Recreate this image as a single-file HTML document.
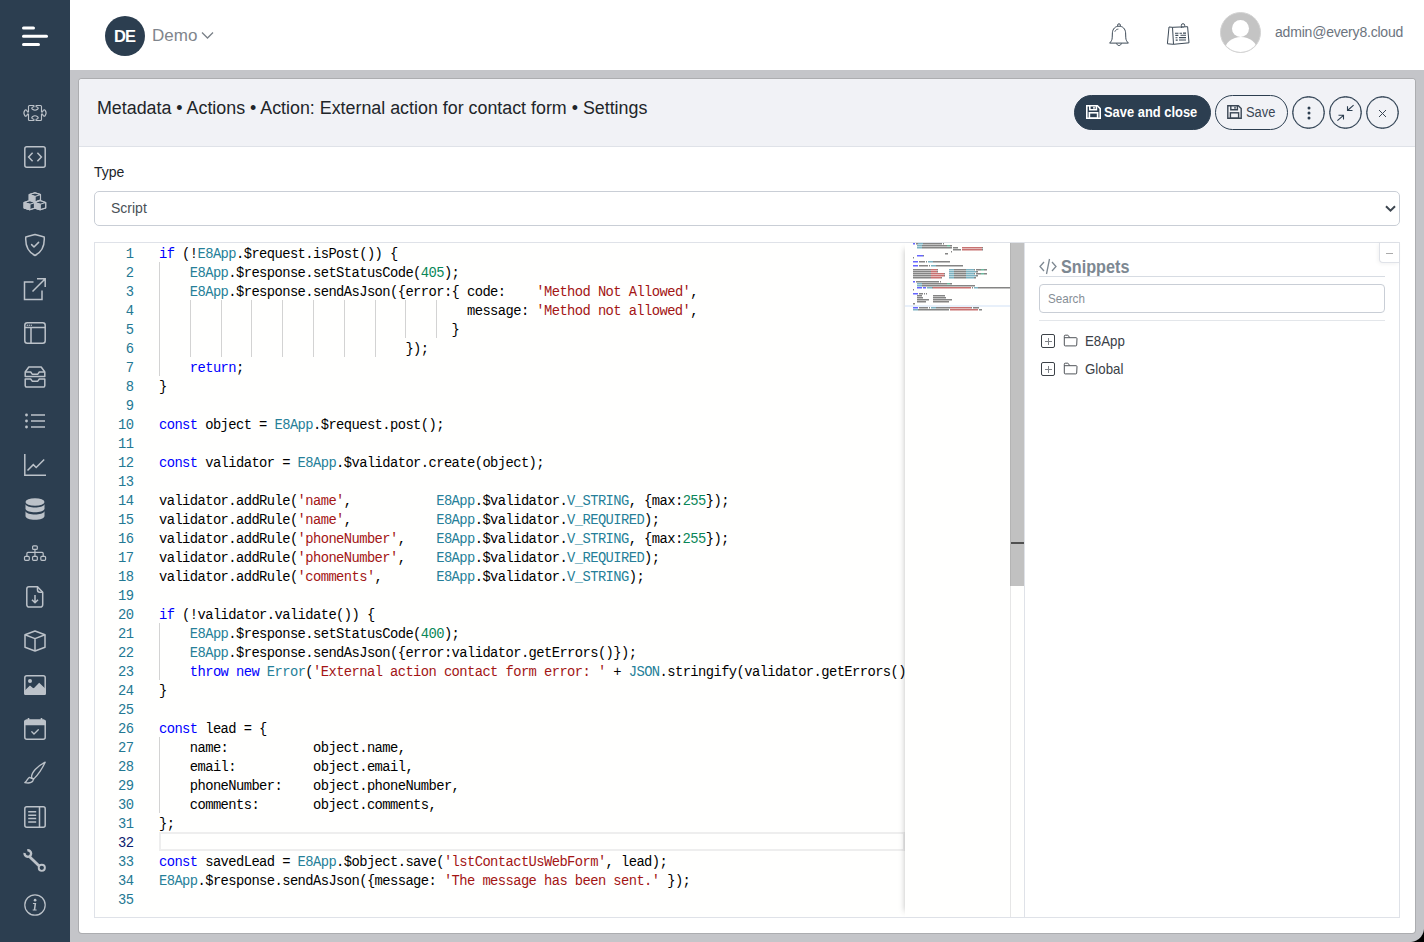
<!DOCTYPE html>
<html><head><meta charset="utf-8">
<style>
*{box-sizing:border-box;margin:0;padding:0}
html,body{width:1424px;height:942px;overflow:hidden;background:#c4c5c9;font-family:"Liberation Sans",sans-serif;color:#212529}
.abs{position:absolute}
#side{position:absolute;left:0;top:0;width:70px;height:942px;background:#2c3e50}
#top{position:absolute;left:70px;top:0;width:1354px;height:70px;background:#fff}
#panel{position:absolute;left:79px;top:79px;width:1336px;height:854px;background:#fff;border-radius:3px;overflow:hidden;box-shadow:0 0 0 1px rgba(0,0,0,.12)}
#phead{position:absolute;left:0;top:0;width:1336px;height:68px;background:#f1f2f6;border-bottom:1px solid #dfe2e8}
.title{position:absolute;left:18px;top:19px;font-size:17.85px;line-height:21px;color:#212529;white-space:nowrap}
.btn{position:absolute;border:1px solid #2c3e50;border-radius:18px;height:35px;font-size:15px;white-space:nowrap}
.cbtn{position:absolute;border:1px solid #2c3e50;box-shadow:inset 0 0 0 .4px #2c3e50;border-radius:50%;width:33px;height:33px}
.lbl{position:absolute;left:15px;top:85px;font-size:14px;line-height:16px}
.sel{position:absolute;left:15px;top:112px;width:1306px;height:35px;border:1px solid #c9ced6;border-radius:5px;font-size:14px;color:#495057}
#editor{position:absolute;left:15px;top:163px;width:1306px;height:676px;border:1px solid #dfe2e8;background:#fff}
#code{position:absolute;left:0;top:0;width:810px;height:674px;background:#fffffe;overflow:hidden;font-family:"Liberation Mono",monospace;font-size:13.8px;letter-spacing:-0.58px;line-height:19px}
#cur{position:absolute;left:64px;top:589px;width:746px;height:19px;border:2px solid #eeeeee}
.ln{position:absolute;left:0;width:38.5px;text-align:right;color:#237893;height:19px;margin-top:2px}
.ln.act{color:#0b216f}
.g{position:absolute;width:1px;height:19px;background:#d3d3d3}
.line{position:absolute;left:64px;white-space:pre;color:#000;height:19px;margin-top:1.5px}
.k{color:#0000ff}.t{color:#267f99}.s{color:#a31515}.n{color:#098658}
#mmap{position:absolute;left:810px;top:0;width:105px;height:674px;background:#fffffe;box-shadow:-6px 0 6px -6px rgba(0,0,0,.25)}
#mmap i{position:absolute;height:2px;margin-left:8px;opacity:.6}
#mmhl{position:absolute;left:0;top:62px;width:105px;height:2px;background:#e8f0fa}
#sbar{position:absolute;left:915px;top:0;width:14px;height:674px;background:#fffffe;border-left:1px solid #e6e6e6}
#thumb{position:absolute;left:-1px;top:0;width:14px;height:343px;background:#c1c1c1;box-shadow:inset 1px 0 0 #b4b4b4}
#ovl{position:absolute;left:0;top:299px;width:13px;height:2px;background:#505050}
#snip{position:absolute;left:929px;top:0;width:375px;height:674px;background:#fff;border-left:1px solid #dfe2e8}
.tree{position:absolute;left:0;height:14px;width:300px}
.pb{position:absolute;left:16px;top:0;width:14px;height:14px;border:1px solid #3c4248;border-radius:2px}
.pb:before{content:"";position:absolute;left:2.5px;top:5.5px;width:7px;height:1px;background:#808489}
.pb:after{content:"";position:absolute;left:5.5px;top:2.5px;width:1px;height:7px;background:#808489}
.tl{position:absolute;left:60px;top:-1px;font-size:14.5px;line-height:16px;color:#3a4047;transform:scaleX(0.915);transform-origin:0 0}
#corner{position:absolute;left:1410px;top:928px;width:14px;height:14px;background:radial-gradient(circle at 0 0,transparent 13.5px,#000 14.5px)}

</style></head><body>
<div id="side">
<svg class="abs" style="left:22px;top:26px" width="27" height="21" viewBox="0 0 27 21"><g stroke="#fff" stroke-width="3" stroke-linecap="round"><line x1="1.5" y1="2" x2="11.5" y2="2"/><line x1="1.5" y1="10.2" x2="24.5" y2="10.2"/><line x1="1.5" y1="18.5" x2="16.5" y2="18.5"/></g></svg>
<svg class="abs ic" style="left:22px;top:103px" width="26" height="20" viewBox="0 0 26 20" fill="none" stroke="#bcc2c9" stroke-width="1.15" stroke-linejoin="round">
<path d="M7.5 2.5H11.9V3.7A3.2 1.7 0 1 0 14.1 3.7V2.5H18.5Q19.5 2.5 19.5 3.5V8.9H20.6A1.7 3.2 0 1 1 20.6 11.1H19.5V16.5Q19.5 17.5 18.5 17.5H14.1V16.3A3.2 1.7 0 1 0 11.9 16.3V17.5H7.5Q6.5 17.5 6.5 16.5V11.1H5.4A1.7 3.2 0 1 1 5.4 8.9H6.5V3.5Q6.5 2.5 7.5 2.5Z"/></svg>
<svg class="abs ic" style="left:24px;top:146px" width="22" height="22" viewBox="0 0 22 22" fill="none" stroke="#bcc2c9" stroke-width="1.5"><rect x="0.8" y="0.8" width="20.4" height="20.4" rx="2"/><path d="M8.6 6.8 4.6 11l4 4.2M13.4 6.8l4 4.2-4 4.2"/></svg>
<svg class="abs ic" style="left:23px;top:191px" width="24" height="20" viewBox="0 0 24 20" stroke="#bcc2c9" stroke-width="1.1" stroke-linejoin="round"><path d="M11.9 1.7L17.5 3.5999999999999996V9.1L11.9 11.0L6.300000000000001 9.1V3.5999999999999996Z" fill="#2c3e50"/><path d="M6.300000000000001 3.5999999999999996L11.9 5.5V11.0L6.300000000000001 9.1Z" fill="#bcc2c9"/><path d="M11.9 1.7L17.5 3.5999999999999996V9.1L11.9 11.0L6.300000000000001 9.1V3.5999999999999996ZM6.300000000000001 3.5999999999999996L11.9 5.5L17.5 3.5999999999999996M11.9 5.5V11.0" fill="none"/><path d="M6.75 9.5L12.35 11.4V16.9L6.75 18.8L1.1500000000000004 16.9V11.4Z" fill="#2c3e50"/><path d="M1.1500000000000004 11.4L6.75 13.3V18.8L1.1500000000000004 16.9Z" fill="#bcc2c9"/><path d="M6.75 9.5L12.35 11.4V16.9L6.75 18.8L1.1500000000000004 16.9V11.4ZM1.1500000000000004 11.4L6.75 13.3L12.35 11.4M6.75 13.3V18.8" fill="none"/><path d="M17.1 9.5L22.700000000000003 11.4V16.9L17.1 18.8L11.500000000000002 16.9V11.4Z" fill="#2c3e50"/><path d="M11.500000000000002 11.4L17.1 13.3V18.8L11.500000000000002 16.9Z" fill="#bcc2c9"/><path d="M17.1 9.5L22.700000000000003 11.4V16.9L17.1 18.8L11.500000000000002 16.9V11.4ZM11.500000000000002 11.4L17.1 13.3L22.700000000000003 11.4M17.1 13.3V18.8" fill="none"/></svg>
<svg class="abs ic" style="left:24px;top:233px" width="22" height="24" viewBox="0 0 22 24" fill="none" stroke="#bcc2c9" stroke-width="1.5" stroke-linejoin="round" stroke-linecap="round">
<path d="M11 1.5C8 2.4 4.6 3.3 1.8 3.9 1.2 12 4.4 19.2 11 22.5 17.6 19.2 20.8 12 20.2 3.9 17.4 3.3 14 2.4 11 1.5z"/><path d="M7.6 11.6l2.4 2.4 4.6-4.6"/></svg>
<svg class="abs ic" style="left:23px;top:277px" width="24" height="24" viewBox="0 0 24 24" fill="none" stroke="#bcc2c9" stroke-width="1.5">
<path d="M10.5 5H1.5v17.5h17.5V13.5"/><path d="M9.5 14.5 22 2M14 1.8h8.2V10"/></svg>
<svg class="abs ic" style="left:24px;top:322px" width="22" height="22" viewBox="0 0 22 22" fill="none" stroke="#bcc2c9" stroke-width="1.5">
<rect x="0.8" y="0.8" width="20.4" height="20.4" rx="2.5"/><path d="M0.8 5.5h20.4M7 5.5v15.7"/><g fill="#bcc2c9" stroke="none"><circle cx="3.3" cy="3.2" r=".7"/><circle cx="5.3" cy="3.2" r=".7"/><circle cx="7.3" cy="3.2" r=".7"/></g></svg>
<svg class="abs ic" style="left:24px;top:366px" width="22" height="22" viewBox="0 0 22 22" fill="none" stroke="#bcc2c9" stroke-width="1.5" stroke-linejoin="round">
<path d="M4.8 1h12.4l3.6 5v4.5H1.2V6z"/><path d="M1.2 6h5.5l1.5 2.2h5.6L15.3 6h5.5"/><path d="M1.2 13h5.5l1.5 2.2h5.6l1.5-2.2h5.5v6.6a1.5 1.5 0 0 1-1.5 1.5H2.7a1.5 1.5 0 0 1-1.5-1.5z"/></svg>
<svg class="abs ic" style="left:24px;top:413px" width="22" height="16" viewBox="0 0 22 16" fill="none" stroke="#bcc2c9" stroke-width="1.5">
<path d="M7 2h14M7 8h14M7 14h14"/><g fill="#bcc2c9" stroke="none"><circle cx="2.5" cy="2" r="1.4"/><circle cx="2.5" cy="8" r="1.4"/><circle cx="2.5" cy="14" r="1.4"/></g></svg>
<svg class="abs ic" style="left:24px;top:454px" width="22" height="22" viewBox="0 0 22 22" fill="none" stroke="#bcc2c9" stroke-width="1.5">
<path d="M0.8 0v21.2H22"/><path d="M3.5 16.5 9.3 10.6l2.9 2.9L20.2 5.5" stroke-linejoin="miter"/></svg>
<svg class="abs ic" style="left:25px;top:498px" width="20" height="22" viewBox="0 0 20 22" fill="#bcc2c9">
<ellipse cx="10" cy="4" rx="9.5" ry="3.8"/><path d="M.5 6.3C1.5 8.6 5.5 9.6 10 9.6s8.5-1 9.5-3.3v4.6c-1 2.3-5 3.3-9.5 3.3S1.5 13.2.5 10.9z"/><path d="M.5 13.3c1 2.3 5 3.3 9.5 3.3s8.5-1 9.5-3.3V18c0 2.2-4.2 3.8-9.5 3.8S.5 20.2.5 18z"/></svg>
<svg class="abs ic" style="left:23px;top:543px" width="24" height="20" viewBox="0 0 24 20" fill="none" stroke="#bcc2c9" stroke-width="1.2">
<rect x="9.6" y="2.8" width="4.7" height="3.6" rx="1"/><path d="M11.95 6.4V9.4M3.9 13.3V10.4Q3.9 9.4 4.9 9.4H19.2Q20.2 9.4 20.2 10.4V13.3M11.95 9.4V13.3"/><rect x="1.5" y="13.4" width="4.8" height="3.9" rx="1"/><rect x="9.55" y="13.4" width="4.8" height="3.9" rx="1"/><rect x="17.8" y="13.4" width="4.8" height="3.9" rx="1"/></svg>
<svg class="abs ic" style="left:26px;top:586px" width="18" height="22" viewBox="0 0 18 22" fill="none" stroke="#bcc2c9" stroke-width="1.5" stroke-linejoin="round">
<path d="M3 .8h8.5l5.2 5.4v12.6a2.3 2.3 0 0 1-2.3 2.3H3.1A2.3 2.3 0 0 1 .8 18.8V3A2.2 2.2 0 0 1 3 .8z"/><path d="M11.5.8v3.2a2.2 2.2 0 0 0 2.2 2.2h3"/><path d="M9 9v7.8M6 13.8 9 16.8l3-3"/></svg>
<svg class="abs ic" style="left:24px;top:630px" width="22" height="22" viewBox="0 0 22 22" fill="none" stroke="#bcc2c9" stroke-width="1.5" stroke-linejoin="round">
<path d="M11 1 21 4.8v12.4L11 21 1 17.2V4.8z"/><path d="M1 4.8 11 8.6 21 4.8M11 8.6V21"/></svg>
<svg class="abs ic" style="left:24px;top:675px" width="22" height="20" viewBox="0 0 22 20" fill="none" stroke="#bcc2c9" stroke-width="1.5">
<rect x="0.8" y="0.8" width="20.4" height="18.4" rx="2"/><circle cx="6" cy="6" r="2" fill="#bcc2c9" stroke="none"/><path d="M0.8 16.5 6 11.5l3.6 3 5.6-5.6 6 5.6v3.7a1.5 1.5 0 0 1-1.5 1.5H2.3a1.5 1.5 0 0 1-1.5-1.5z" fill="#bcc2c9"/></svg>
<svg class="abs ic" style="left:24px;top:718px" width="22" height="22" viewBox="0 0 22 22" fill="none" stroke="#bcc2c9" stroke-width="1.5">
<path d="M0.8 6.5V4.2a2 2 0 0 1 2-2h16.4a2 2 0 0 1 2 2v2.3z" fill="#bcc2c9"/><rect x="0.8" y="2.2" width="20.4" height="19" rx="2"/><path d="M4.5 0v3M17.5 0v3" stroke-width="1.6"/><path d="M7.8 13.8l2.2 2.2 4.3-4.3" stroke-width="1.3" stroke-linecap="round"/></svg>
<svg class="abs ic" style="left:24px;top:761px" width="23" height="24" viewBox="0 0 23 24" fill="none" stroke="#bcc2c9" stroke-width="1.3" stroke-linejoin="round">
<path d="M7.6 16.9C6.8 11.5 13.5 5 21.2 1.2 18.5 7 14 13.8 9.8 17.9z"/><path d="M5.4 16.3 9.6 18.1C9 21.2 6.2 22.8 .8 21.6 3.2 20.2 3.5 17.2 5.4 16.3z"/></svg>
<svg class="abs ic" style="left:24px;top:806px" width="22" height="22" viewBox="0 0 22 22" fill="none" stroke="#bcc2c9" stroke-width="1.5">
<rect x="0.8" y="0.8" width="20.4" height="20.4" rx="2"/><path d="M15.5 0.8v20.4M4.2 5.8h8M4.2 9.2h8M4.2 12.6h8M4.2 16h8"/></svg>
<svg class="abs ic" style="left:23px;top:849px" width="23" height="23" viewBox="0 0 23 23" fill="none" stroke="#bcc2c9">
<path d="M4.29 1.31A3.25 3.25 0 1 1 1.65 3.94" stroke-width="2.4"/><path d="M6.6 7.7 16.2 16.9" stroke-width="2.8"/><circle cx="18.8" cy="18.8" r="3.1" stroke-width="1.9"/></svg>
<svg class="abs ic" style="left:24px;top:894px" width="22" height="22" viewBox="0 0 22 22" fill="none" stroke="#bcc2c9" stroke-width="1.25">
<circle cx="11" cy="11" r="10.2"/><g fill="#bcc2c9" stroke="none"><circle cx="11.1" cy="6.2" r="1.35"/><path d="M9 8.9H12.2L11.3 15.4H12.6V16.6H8.7V15.4H9.8L10.5 10.1H8.9Z"/></g></svg>
</div>

<div id="top">
<div class="abs" style="left:35px;top:16px;width:40px;height:40px;border-radius:50%;background:#2c3e50;color:#fff;font-weight:bold;font-size:16.5px;line-height:41px;text-align:center;letter-spacing:-1px;text-indent:-1px">DE</div>
<div class="abs" style="left:82px;top:26px;font-size:17px;color:#7f858c;line-height:20px">Demo</div>
<svg class="abs" style="left:131px;top:30.5px" width="13" height="9" viewBox="0 0 13 9" fill="none" stroke="#7a8088" stroke-width="1.3"><path d="M1 1.5l5.5 5.5L12 1.5"/></svg>
<svg class="abs" style="left:1038px;top:23px" width="22" height="24" viewBox="0 0 22 24" fill="none" stroke="#3d4a57" stroke-width="1" stroke-linejoin="round">
<path d="M11 3.2c-3.8 0-6.3 2.6-6.6 6.6l-.2 5c-.1 2.2-1 3.7-2.6 5.3h18.8c-1.6-1.6-2.5-3.1-2.6-5.3l-.2-5C17.3 5.8 14.8 3.2 11 3.2z"/><path d="M9.6 3.3V2.2a1.4 1.4 0 0 1 2.8 0v1.1M8.6 20.4c.4 1.3 1.2 2.1 2.4 2.1s2-.8 2.4-2.1"/><path d="M6.8 8.8c.5-1.6 1.8-2.6 3.6-2.7" stroke-width=".8"/></svg>
<svg class="abs" style="left:1096px;top:22px" width="26" height="25" viewBox="0 0 26 25" fill="none" stroke="#3d4a57" stroke-width="1" stroke-linejoin="round">
<path d="M6.5 5.3 21.6 4.7 23 20.8 7.5 22.3z"/><path d="M6.5 5.3 3 5 1.4 21.8 7.5 22.3"/><circle cx="17" cy="3.4" r="1.7" fill="#fff"/><path d="M15.8 4.6 15 6"/><path d="M9 11.3h3.5M13.5 11.2h2.5M17 11.1h3M9.3 13.4h3M14.5 13.3h5.5M9.5 15.7h2M13 15.6h7M9.7 18.1h2M13 18h7" stroke-width="1.1"/></svg>
<div class="abs" style="left:1150px;top:12px;width:41px;height:41px;border-radius:50%;background:#c4c4c4;overflow:hidden;border:1px solid #d4d4d4">
<div class="abs" style="left:11px;top:7px;width:17px;height:17px;border-radius:50%;background:#fff"></div>
<div class="abs" style="left:4px;top:24px;width:32px;height:26px;border-radius:50%;background:#fff"></div>
</div>
<div class="abs" style="left:1205px;top:23px;font-size:14px;letter-spacing:-0.2px;color:#6c747e;line-height:18px">admin@every8.cloud</div>
</div>

<div id="panel">
  <div id="phead">
    <div class="title">Metadata • Actions • Action: External action for contact form • Settings</div>
    <div class="btn" style="left:995px;top:16px;width:137px;background:#2c3e50;color:#fff;font-weight:bold">
      <svg class="abs" style="left:11px;top:9px" width="15" height="14" viewBox="0 0 15 14" fill="none" stroke="#fff" stroke-width="1.6"><path d="M.8 .8h10.6L14.2 3.6V13.2H.8z"/><path d="M3.8 .8v4h6.6v-4M8 1.8v2"/><rect x="3.4" y="7.8" width="8.2" height="5.4"/></svg>
      <span class="abs" style="left:29px;top:7px;line-height:18px;font-size:14.5px;transform:scaleX(0.89);transform-origin:0 0">Save and close</span>
    </div>
    <div class="btn" style="left:1136px;top:16px;width:73px;color:#3a4654">
      <svg class="abs" style="left:11px;top:9px" width="15" height="14" viewBox="0 0 15 14" fill="none" stroke="#3a4654" stroke-width="1.4"><path d="M.8 .8h10.6L14.2 3.6V13.2H.8z"/><path d="M3.8 .8v4h6.6v-4M8 1.8v2"/><rect x="3.4" y="7.8" width="8.2" height="5.4"/></svg>
      <span class="abs" style="left:29.5px;top:7px;line-height:18px;font-size:14px;transform:scaleX(0.92);transform-origin:0 0">Save</span>
    </div>
    <div class="cbtn" style="left:1213px;top:17px"><svg class="abs" style="left:14px;top:9px" width="4" height="14" viewBox="0 0 4 14" fill="#2c3e50"><circle cx="2" cy="2" r="1.5"/><circle cx="2" cy="7" r="1.5"/><circle cx="2" cy="12" r="1.5"/></svg></div>
    <div class="cbtn" style="left:1250px;top:17px"><svg class="abs" style="left:5px;top:5px" width="21" height="21" viewBox="0 0 21 21" fill="none" stroke="#2c3e50" stroke-width="1.1"><path d="M2.4 18.7 8.5 13.3M3.5 13.3h5v4.2M18.6 3.2 12.5 8.5M12.5 4.3v4.2h5"/></svg></div>
    <div class="cbtn" style="left:1287px;top:17px"><svg class="abs" style="left:11px;top:12px" width="9" height="9" viewBox="0 0 9 9" fill="none" stroke="#3a4654" stroke-width="1"><path d="M1 1l7 7M8 1 1 8"/></svg></div>
  </div>
  <div class="lbl">Type</div>
  <div class="sel"><span class="abs" style="left:16px;top:8px;line-height:16px">Script</span>
    <svg class="abs" style="left:1290px;top:13px" width="11" height="8" viewBox="0 0 11 8" fill="none" stroke="#3d4650" stroke-width="2"><path d="M1 1.2 5.5 5.7 10 1.2"/></svg></div>
  <div id="editor">
    <div id="code"><div id="cur"></div>
<div class="ln" style="top:0px">1</div>
<div class="line" style="top:0px"><span class="k">if</span> (!<span class="t">E8App</span>.$request.isPost()) {</div>
<div class="ln" style="top:19px">2</div>
<div class="g" style="left:64.0px;top:19px"></div>
<div class="line" style="top:19px">    <span class="t">E8App</span>.$response.setStatusCode(<span class="n">405</span>);</div>
<div class="ln" style="top:38px">3</div>
<div class="g" style="left:64.0px;top:38px"></div>
<div class="line" style="top:38px">    <span class="t">E8App</span>.$response.sendAsJson({error:{ code:    <span class="s">&#x27;Method Not Allowed&#x27;</span>,</div>
<div class="ln" style="top:57px">4</div>
<div class="g" style="left:64.0px;top:57px"></div>
<div class="g" style="left:94.8px;top:57px"></div>
<div class="g" style="left:125.6px;top:57px"></div>
<div class="g" style="left:156.4px;top:57px"></div>
<div class="g" style="left:187.2px;top:57px"></div>
<div class="g" style="left:218.0px;top:57px"></div>
<div class="g" style="left:248.8px;top:57px"></div>
<div class="g" style="left:279.6px;top:57px"></div>
<div class="g" style="left:310.4px;top:57px"></div>
<div class="g" style="left:341.2px;top:57px"></div>
<div class="line" style="top:57px">                                        message: <span class="s">&#x27;Method not allowed&#x27;</span>,</div>
<div class="ln" style="top:76px">5</div>
<div class="g" style="left:64.0px;top:76px"></div>
<div class="g" style="left:94.8px;top:76px"></div>
<div class="g" style="left:125.6px;top:76px"></div>
<div class="g" style="left:156.4px;top:76px"></div>
<div class="g" style="left:187.2px;top:76px"></div>
<div class="g" style="left:218.0px;top:76px"></div>
<div class="g" style="left:248.8px;top:76px"></div>
<div class="g" style="left:279.6px;top:76px"></div>
<div class="g" style="left:310.4px;top:76px"></div>
<div class="g" style="left:341.2px;top:76px"></div>
<div class="line" style="top:76px">                                      }</div>
<div class="ln" style="top:95px">6</div>
<div class="g" style="left:64.0px;top:95px"></div>
<div class="g" style="left:94.8px;top:95px"></div>
<div class="g" style="left:125.6px;top:95px"></div>
<div class="g" style="left:156.4px;top:95px"></div>
<div class="g" style="left:187.2px;top:95px"></div>
<div class="g" style="left:218.0px;top:95px"></div>
<div class="g" style="left:248.8px;top:95px"></div>
<div class="g" style="left:279.6px;top:95px"></div>
<div class="line" style="top:95px">                                });</div>
<div class="ln" style="top:114px">7</div>
<div class="g" style="left:64.0px;top:114px"></div>
<div class="line" style="top:114px">    <span class="k">return</span>;</div>
<div class="ln" style="top:133px">8</div>
<div class="line" style="top:133px">}</div>
<div class="ln" style="top:152px">9</div>
<div class="ln" style="top:171px">10</div>
<div class="line" style="top:171px"><span class="k">const</span> object = <span class="t">E8App</span>.$request.post();</div>
<div class="ln" style="top:190px">11</div>
<div class="ln" style="top:209px">12</div>
<div class="line" style="top:209px"><span class="k">const</span> validator = <span class="t">E8App</span>.$validator.create(object);</div>
<div class="ln" style="top:228px">13</div>
<div class="ln" style="top:247px">14</div>
<div class="line" style="top:247px">validator.addRule(<span class="s">&#x27;name&#x27;</span>,           <span class="t">E8App</span>.$validator.<span class="t">V_STRING</span>, {max:<span class="n">255</span>});</div>
<div class="ln" style="top:266px">15</div>
<div class="line" style="top:266px">validator.addRule(<span class="s">&#x27;name&#x27;</span>,           <span class="t">E8App</span>.$validator.<span class="t">V_REQUIRED</span>);</div>
<div class="ln" style="top:285px">16</div>
<div class="line" style="top:285px">validator.addRule(<span class="s">&#x27;phoneNumber&#x27;</span>,    <span class="t">E8App</span>.$validator.<span class="t">V_STRING</span>, {max:<span class="n">255</span>});</div>
<div class="ln" style="top:304px">17</div>
<div class="line" style="top:304px">validator.addRule(<span class="s">&#x27;phoneNumber&#x27;</span>,    <span class="t">E8App</span>.$validator.<span class="t">V_REQUIRED</span>);</div>
<div class="ln" style="top:323px">18</div>
<div class="line" style="top:323px">validator.addRule(<span class="s">&#x27;comments&#x27;</span>,       <span class="t">E8App</span>.$validator.<span class="t">V_STRING</span>);</div>
<div class="ln" style="top:342px">19</div>
<div class="ln" style="top:361px">20</div>
<div class="line" style="top:361px"><span class="k">if</span> (!validator.validate()) {</div>
<div class="ln" style="top:380px">21</div>
<div class="g" style="left:64.0px;top:380px"></div>
<div class="line" style="top:380px">    <span class="t">E8App</span>.$response.setStatusCode(<span class="n">400</span>);</div>
<div class="ln" style="top:399px">22</div>
<div class="g" style="left:64.0px;top:399px"></div>
<div class="line" style="top:399px">    <span class="t">E8App</span>.$response.sendAsJson({error:validator.getErrors()});</div>
<div class="ln" style="top:418px">23</div>
<div class="g" style="left:64.0px;top:418px"></div>
<div class="line" style="top:418px">    <span class="k">throw</span> <span class="k">new</span> <span class="t">Error</span>(<span class="s">&#x27;External action contact form error: &#x27;</span> + <span class="t">JSON</span>.stringify(validator.getErrors()));</div>
<div class="ln" style="top:437px">24</div>
<div class="line" style="top:437px">}</div>
<div class="ln" style="top:456px">25</div>
<div class="ln" style="top:475px">26</div>
<div class="line" style="top:475px"><span class="k">const</span> lead = {</div>
<div class="ln" style="top:494px">27</div>
<div class="g" style="left:64.0px;top:494px"></div>
<div class="line" style="top:494px">    name:           object.name,</div>
<div class="ln" style="top:513px">28</div>
<div class="g" style="left:64.0px;top:513px"></div>
<div class="line" style="top:513px">    email:          object.email,</div>
<div class="ln" style="top:532px">29</div>
<div class="g" style="left:64.0px;top:532px"></div>
<div class="line" style="top:532px">    phoneNumber:    object.phoneNumber,</div>
<div class="ln" style="top:551px">30</div>
<div class="g" style="left:64.0px;top:551px"></div>
<div class="line" style="top:551px">    comments:       object.comments,</div>
<div class="ln" style="top:570px">31</div>
<div class="line" style="top:570px">};</div>
<div class="ln act" style="top:589px">32</div>
<div class="ln" style="top:608px">33</div>
<div class="line" style="top:608px"><span class="k">const</span> savedLead = <span class="t">E8App</span>.$object.save(<span class="s">&#x27;lstContactUsWebForm&#x27;</span>, lead);</div>
<div class="ln" style="top:627px">34</div>
<div class="line" style="top:627px"><span class="t">E8App</span>.$response.sendAsJson({message: <span class="s">&#x27;The message has been sent.&#x27;</span> });</div>
<div class="ln" style="top:646px">35</div>
    </div>
    <div id="mmap"><div id="mmhl"></div><i style="left:0px;top:0px;width:2px;background:linear-gradient(#0000ff 50%,#0000ff80 50%)"></i><i style="left:3px;top:0px;width:1px;background:linear-gradient(#333333 50%,#33333380 50%)"></i><i style="left:4px;top:0px;width:1px;background:linear-gradient(#333333 50%,#33333380 50%)"></i><i style="left:5px;top:0px;width:5px;background:linear-gradient(#267f99 50%,#267f9980 50%)"></i><i style="left:10px;top:0px;width:1px;background:linear-gradient(#333333 50%,#33333380 50%)"></i><i style="left:11px;top:0px;width:8px;background:linear-gradient(#333333 50%,#33333380 50%)"></i><i style="left:19px;top:0px;width:1px;background:linear-gradient(#333333 50%,#33333380 50%)"></i><i style="left:20px;top:0px;width:6px;background:linear-gradient(#333333 50%,#33333380 50%)"></i><i style="left:26px;top:0px;width:1px;background:linear-gradient(#333333 50%,#33333380 50%)"></i><i style="left:27px;top:0px;width:1px;background:linear-gradient(#333333 50%,#33333380 50%)"></i><i style="left:28px;top:0px;width:1px;background:linear-gradient(#333333 50%,#33333380 50%)"></i><i style="left:30px;top:0px;width:1px;background:linear-gradient(#333333 50%,#33333380 50%)"></i><i style="left:4px;top:2px;width:5px;background:linear-gradient(#267f99 50%,#267f9980 50%)"></i><i style="left:9px;top:2px;width:1px;background:linear-gradient(#333333 50%,#33333380 50%)"></i><i style="left:10px;top:2px;width:9px;background:linear-gradient(#333333 50%,#33333380 50%)"></i><i style="left:19px;top:2px;width:1px;background:linear-gradient(#333333 50%,#33333380 50%)"></i><i style="left:20px;top:2px;width:13px;background:linear-gradient(#333333 50%,#33333380 50%)"></i><i style="left:33px;top:2px;width:1px;background:linear-gradient(#333333 50%,#33333380 50%)"></i><i style="left:34px;top:2px;width:3px;background:linear-gradient(#098658 50%,#09865880 50%)"></i><i style="left:37px;top:2px;width:1px;background:linear-gradient(#333333 50%,#33333380 50%)"></i><i style="left:38px;top:2px;width:1px;background:linear-gradient(#333333 50%,#33333380 50%)"></i><i style="left:4px;top:4px;width:5px;background:linear-gradient(#267f99 50%,#267f9980 50%)"></i><i style="left:9px;top:4px;width:1px;background:linear-gradient(#333333 50%,#33333380 50%)"></i><i style="left:10px;top:4px;width:9px;background:linear-gradient(#333333 50%,#33333380 50%)"></i><i style="left:19px;top:4px;width:1px;background:linear-gradient(#333333 50%,#33333380 50%)"></i><i style="left:20px;top:4px;width:10px;background:linear-gradient(#333333 50%,#33333380 50%)"></i><i style="left:30px;top:4px;width:1px;background:linear-gradient(#333333 50%,#33333380 50%)"></i><i style="left:31px;top:4px;width:1px;background:linear-gradient(#333333 50%,#33333380 50%)"></i><i style="left:32px;top:4px;width:5px;background:linear-gradient(#333333 50%,#33333380 50%)"></i><i style="left:37px;top:4px;width:1px;background:linear-gradient(#333333 50%,#33333380 50%)"></i><i style="left:38px;top:4px;width:1px;background:linear-gradient(#333333 50%,#33333380 50%)"></i><i style="left:40px;top:4px;width:4px;background:linear-gradient(#333333 50%,#33333380 50%)"></i><i style="left:44px;top:4px;width:1px;background:linear-gradient(#333333 50%,#33333380 50%)"></i><i style="left:49px;top:4px;width:20px;background:linear-gradient(#a31515 50%,#a3151580 50%)"></i><i style="left:69px;top:4px;width:1px;background:linear-gradient(#333333 50%,#33333380 50%)"></i><i style="left:40px;top:6px;width:7px;background:linear-gradient(#333333 50%,#33333380 50%)"></i><i style="left:47px;top:6px;width:1px;background:linear-gradient(#333333 50%,#33333380 50%)"></i><i style="left:49px;top:6px;width:20px;background:linear-gradient(#a31515 50%,#a3151580 50%)"></i><i style="left:69px;top:6px;width:1px;background:linear-gradient(#333333 50%,#33333380 50%)"></i><i style="left:38px;top:8px;width:1px;background:linear-gradient(#333333 50%,#33333380 50%)"></i><i style="left:32px;top:10px;width:1px;background:linear-gradient(#333333 50%,#33333380 50%)"></i><i style="left:33px;top:10px;width:1px;background:linear-gradient(#333333 50%,#33333380 50%)"></i><i style="left:34px;top:10px;width:1px;background:linear-gradient(#333333 50%,#33333380 50%)"></i><i style="left:4px;top:12px;width:6px;background:linear-gradient(#0000ff 50%,#0000ff80 50%)"></i><i style="left:10px;top:12px;width:1px;background:linear-gradient(#333333 50%,#33333380 50%)"></i><i style="left:0px;top:14px;width:1px;background:linear-gradient(#333333 50%,#33333380 50%)"></i><i style="left:0px;top:18px;width:5px;background:linear-gradient(#0000ff 50%,#0000ff80 50%)"></i><i style="left:6px;top:18px;width:6px;background:linear-gradient(#333333 50%,#33333380 50%)"></i><i style="left:13px;top:18px;width:1px;background:linear-gradient(#333333 50%,#33333380 50%)"></i><i style="left:15px;top:18px;width:5px;background:linear-gradient(#267f99 50%,#267f9980 50%)"></i><i style="left:20px;top:18px;width:1px;background:linear-gradient(#333333 50%,#33333380 50%)"></i><i style="left:21px;top:18px;width:8px;background:linear-gradient(#333333 50%,#33333380 50%)"></i><i style="left:29px;top:18px;width:1px;background:linear-gradient(#333333 50%,#33333380 50%)"></i><i style="left:30px;top:18px;width:4px;background:linear-gradient(#333333 50%,#33333380 50%)"></i><i style="left:34px;top:18px;width:1px;background:linear-gradient(#333333 50%,#33333380 50%)"></i><i style="left:35px;top:18px;width:1px;background:linear-gradient(#333333 50%,#33333380 50%)"></i><i style="left:36px;top:18px;width:1px;background:linear-gradient(#333333 50%,#33333380 50%)"></i><i style="left:0px;top:22px;width:5px;background:linear-gradient(#0000ff 50%,#0000ff80 50%)"></i><i style="left:6px;top:22px;width:9px;background:linear-gradient(#333333 50%,#33333380 50%)"></i><i style="left:16px;top:22px;width:1px;background:linear-gradient(#333333 50%,#33333380 50%)"></i><i style="left:18px;top:22px;width:5px;background:linear-gradient(#267f99 50%,#267f9980 50%)"></i><i style="left:23px;top:22px;width:1px;background:linear-gradient(#333333 50%,#33333380 50%)"></i><i style="left:24px;top:22px;width:10px;background:linear-gradient(#333333 50%,#33333380 50%)"></i><i style="left:34px;top:22px;width:1px;background:linear-gradient(#333333 50%,#33333380 50%)"></i><i style="left:35px;top:22px;width:6px;background:linear-gradient(#333333 50%,#33333380 50%)"></i><i style="left:41px;top:22px;width:1px;background:linear-gradient(#333333 50%,#33333380 50%)"></i><i style="left:42px;top:22px;width:6px;background:linear-gradient(#333333 50%,#33333380 50%)"></i><i style="left:48px;top:22px;width:1px;background:linear-gradient(#333333 50%,#33333380 50%)"></i><i style="left:49px;top:22px;width:1px;background:linear-gradient(#333333 50%,#33333380 50%)"></i><i style="left:0px;top:26px;width:9px;background:linear-gradient(#333333 50%,#33333380 50%)"></i><i style="left:9px;top:26px;width:1px;background:linear-gradient(#333333 50%,#33333380 50%)"></i><i style="left:10px;top:26px;width:7px;background:linear-gradient(#333333 50%,#33333380 50%)"></i><i style="left:17px;top:26px;width:1px;background:linear-gradient(#333333 50%,#33333380 50%)"></i><i style="left:18px;top:26px;width:6px;background:linear-gradient(#a31515 50%,#a3151580 50%)"></i><i style="left:24px;top:26px;width:1px;background:linear-gradient(#333333 50%,#33333380 50%)"></i><i style="left:36px;top:26px;width:5px;background:linear-gradient(#267f99 50%,#267f9980 50%)"></i><i style="left:41px;top:26px;width:1px;background:linear-gradient(#333333 50%,#33333380 50%)"></i><i style="left:42px;top:26px;width:10px;background:linear-gradient(#333333 50%,#33333380 50%)"></i><i style="left:52px;top:26px;width:1px;background:linear-gradient(#333333 50%,#33333380 50%)"></i><i style="left:53px;top:26px;width:8px;background:linear-gradient(#267f99 50%,#267f9980 50%)"></i><i style="left:61px;top:26px;width:1px;background:linear-gradient(#333333 50%,#33333380 50%)"></i><i style="left:63px;top:26px;width:1px;background:linear-gradient(#333333 50%,#33333380 50%)"></i><i style="left:64px;top:26px;width:3px;background:linear-gradient(#333333 50%,#33333380 50%)"></i><i style="left:67px;top:26px;width:1px;background:linear-gradient(#333333 50%,#33333380 50%)"></i><i style="left:68px;top:26px;width:3px;background:linear-gradient(#098658 50%,#09865880 50%)"></i><i style="left:71px;top:26px;width:1px;background:linear-gradient(#333333 50%,#33333380 50%)"></i><i style="left:72px;top:26px;width:1px;background:linear-gradient(#333333 50%,#33333380 50%)"></i><i style="left:73px;top:26px;width:1px;background:linear-gradient(#333333 50%,#33333380 50%)"></i><i style="left:0px;top:28px;width:9px;background:linear-gradient(#333333 50%,#33333380 50%)"></i><i style="left:9px;top:28px;width:1px;background:linear-gradient(#333333 50%,#33333380 50%)"></i><i style="left:10px;top:28px;width:7px;background:linear-gradient(#333333 50%,#33333380 50%)"></i><i style="left:17px;top:28px;width:1px;background:linear-gradient(#333333 50%,#33333380 50%)"></i><i style="left:18px;top:28px;width:6px;background:linear-gradient(#a31515 50%,#a3151580 50%)"></i><i style="left:24px;top:28px;width:1px;background:linear-gradient(#333333 50%,#33333380 50%)"></i><i style="left:36px;top:28px;width:5px;background:linear-gradient(#267f99 50%,#267f9980 50%)"></i><i style="left:41px;top:28px;width:1px;background:linear-gradient(#333333 50%,#33333380 50%)"></i><i style="left:42px;top:28px;width:10px;background:linear-gradient(#333333 50%,#33333380 50%)"></i><i style="left:52px;top:28px;width:1px;background:linear-gradient(#333333 50%,#33333380 50%)"></i><i style="left:53px;top:28px;width:10px;background:linear-gradient(#267f99 50%,#267f9980 50%)"></i><i style="left:63px;top:28px;width:1px;background:linear-gradient(#333333 50%,#33333380 50%)"></i><i style="left:64px;top:28px;width:1px;background:linear-gradient(#333333 50%,#33333380 50%)"></i><i style="left:0px;top:30px;width:9px;background:linear-gradient(#333333 50%,#33333380 50%)"></i><i style="left:9px;top:30px;width:1px;background:linear-gradient(#333333 50%,#33333380 50%)"></i><i style="left:10px;top:30px;width:7px;background:linear-gradient(#333333 50%,#33333380 50%)"></i><i style="left:17px;top:30px;width:1px;background:linear-gradient(#333333 50%,#33333380 50%)"></i><i style="left:18px;top:30px;width:13px;background:linear-gradient(#a31515 50%,#a3151580 50%)"></i><i style="left:31px;top:30px;width:1px;background:linear-gradient(#333333 50%,#33333380 50%)"></i><i style="left:36px;top:30px;width:5px;background:linear-gradient(#267f99 50%,#267f9980 50%)"></i><i style="left:41px;top:30px;width:1px;background:linear-gradient(#333333 50%,#33333380 50%)"></i><i style="left:42px;top:30px;width:10px;background:linear-gradient(#333333 50%,#33333380 50%)"></i><i style="left:52px;top:30px;width:1px;background:linear-gradient(#333333 50%,#33333380 50%)"></i><i style="left:53px;top:30px;width:8px;background:linear-gradient(#267f99 50%,#267f9980 50%)"></i><i style="left:61px;top:30px;width:1px;background:linear-gradient(#333333 50%,#33333380 50%)"></i><i style="left:63px;top:30px;width:1px;background:linear-gradient(#333333 50%,#33333380 50%)"></i><i style="left:64px;top:30px;width:3px;background:linear-gradient(#333333 50%,#33333380 50%)"></i><i style="left:67px;top:30px;width:1px;background:linear-gradient(#333333 50%,#33333380 50%)"></i><i style="left:68px;top:30px;width:3px;background:linear-gradient(#098658 50%,#09865880 50%)"></i><i style="left:71px;top:30px;width:1px;background:linear-gradient(#333333 50%,#33333380 50%)"></i><i style="left:72px;top:30px;width:1px;background:linear-gradient(#333333 50%,#33333380 50%)"></i><i style="left:73px;top:30px;width:1px;background:linear-gradient(#333333 50%,#33333380 50%)"></i><i style="left:0px;top:32px;width:9px;background:linear-gradient(#333333 50%,#33333380 50%)"></i><i style="left:9px;top:32px;width:1px;background:linear-gradient(#333333 50%,#33333380 50%)"></i><i style="left:10px;top:32px;width:7px;background:linear-gradient(#333333 50%,#33333380 50%)"></i><i style="left:17px;top:32px;width:1px;background:linear-gradient(#333333 50%,#33333380 50%)"></i><i style="left:18px;top:32px;width:13px;background:linear-gradient(#a31515 50%,#a3151580 50%)"></i><i style="left:31px;top:32px;width:1px;background:linear-gradient(#333333 50%,#33333380 50%)"></i><i style="left:36px;top:32px;width:5px;background:linear-gradient(#267f99 50%,#267f9980 50%)"></i><i style="left:41px;top:32px;width:1px;background:linear-gradient(#333333 50%,#33333380 50%)"></i><i style="left:42px;top:32px;width:10px;background:linear-gradient(#333333 50%,#33333380 50%)"></i><i style="left:52px;top:32px;width:1px;background:linear-gradient(#333333 50%,#33333380 50%)"></i><i style="left:53px;top:32px;width:10px;background:linear-gradient(#267f99 50%,#267f9980 50%)"></i><i style="left:63px;top:32px;width:1px;background:linear-gradient(#333333 50%,#33333380 50%)"></i><i style="left:64px;top:32px;width:1px;background:linear-gradient(#333333 50%,#33333380 50%)"></i><i style="left:0px;top:34px;width:9px;background:linear-gradient(#333333 50%,#33333380 50%)"></i><i style="left:9px;top:34px;width:1px;background:linear-gradient(#333333 50%,#33333380 50%)"></i><i style="left:10px;top:34px;width:7px;background:linear-gradient(#333333 50%,#33333380 50%)"></i><i style="left:17px;top:34px;width:1px;background:linear-gradient(#333333 50%,#33333380 50%)"></i><i style="left:18px;top:34px;width:10px;background:linear-gradient(#a31515 50%,#a3151580 50%)"></i><i style="left:28px;top:34px;width:1px;background:linear-gradient(#333333 50%,#33333380 50%)"></i><i style="left:36px;top:34px;width:5px;background:linear-gradient(#267f99 50%,#267f9980 50%)"></i><i style="left:41px;top:34px;width:1px;background:linear-gradient(#333333 50%,#33333380 50%)"></i><i style="left:42px;top:34px;width:10px;background:linear-gradient(#333333 50%,#33333380 50%)"></i><i style="left:52px;top:34px;width:1px;background:linear-gradient(#333333 50%,#33333380 50%)"></i><i style="left:53px;top:34px;width:8px;background:linear-gradient(#267f99 50%,#267f9980 50%)"></i><i style="left:61px;top:34px;width:1px;background:linear-gradient(#333333 50%,#33333380 50%)"></i><i style="left:62px;top:34px;width:1px;background:linear-gradient(#333333 50%,#33333380 50%)"></i><i style="left:0px;top:38px;width:2px;background:linear-gradient(#0000ff 50%,#0000ff80 50%)"></i><i style="left:3px;top:38px;width:1px;background:linear-gradient(#333333 50%,#33333380 50%)"></i><i style="left:4px;top:38px;width:1px;background:linear-gradient(#333333 50%,#33333380 50%)"></i><i style="left:5px;top:38px;width:9px;background:linear-gradient(#333333 50%,#33333380 50%)"></i><i style="left:14px;top:38px;width:1px;background:linear-gradient(#333333 50%,#33333380 50%)"></i><i style="left:15px;top:38px;width:8px;background:linear-gradient(#333333 50%,#33333380 50%)"></i><i style="left:23px;top:38px;width:1px;background:linear-gradient(#333333 50%,#33333380 50%)"></i><i style="left:24px;top:38px;width:1px;background:linear-gradient(#333333 50%,#33333380 50%)"></i><i style="left:25px;top:38px;width:1px;background:linear-gradient(#333333 50%,#33333380 50%)"></i><i style="left:27px;top:38px;width:1px;background:linear-gradient(#333333 50%,#33333380 50%)"></i><i style="left:4px;top:40px;width:5px;background:linear-gradient(#267f99 50%,#267f9980 50%)"></i><i style="left:9px;top:40px;width:1px;background:linear-gradient(#333333 50%,#33333380 50%)"></i><i style="left:10px;top:40px;width:9px;background:linear-gradient(#333333 50%,#33333380 50%)"></i><i style="left:19px;top:40px;width:1px;background:linear-gradient(#333333 50%,#33333380 50%)"></i><i style="left:20px;top:40px;width:13px;background:linear-gradient(#333333 50%,#33333380 50%)"></i><i style="left:33px;top:40px;width:1px;background:linear-gradient(#333333 50%,#33333380 50%)"></i><i style="left:34px;top:40px;width:3px;background:linear-gradient(#098658 50%,#09865880 50%)"></i><i style="left:37px;top:40px;width:1px;background:linear-gradient(#333333 50%,#33333380 50%)"></i><i style="left:38px;top:40px;width:1px;background:linear-gradient(#333333 50%,#33333380 50%)"></i><i style="left:4px;top:42px;width:5px;background:linear-gradient(#267f99 50%,#267f9980 50%)"></i><i style="left:9px;top:42px;width:1px;background:linear-gradient(#333333 50%,#33333380 50%)"></i><i style="left:10px;top:42px;width:9px;background:linear-gradient(#333333 50%,#33333380 50%)"></i><i style="left:19px;top:42px;width:1px;background:linear-gradient(#333333 50%,#33333380 50%)"></i><i style="left:20px;top:42px;width:10px;background:linear-gradient(#333333 50%,#33333380 50%)"></i><i style="left:30px;top:42px;width:1px;background:linear-gradient(#333333 50%,#33333380 50%)"></i><i style="left:31px;top:42px;width:1px;background:linear-gradient(#333333 50%,#33333380 50%)"></i><i style="left:32px;top:42px;width:5px;background:linear-gradient(#333333 50%,#33333380 50%)"></i><i style="left:37px;top:42px;width:1px;background:linear-gradient(#333333 50%,#33333380 50%)"></i><i style="left:38px;top:42px;width:9px;background:linear-gradient(#333333 50%,#33333380 50%)"></i><i style="left:47px;top:42px;width:1px;background:linear-gradient(#333333 50%,#33333380 50%)"></i><i style="left:48px;top:42px;width:9px;background:linear-gradient(#333333 50%,#33333380 50%)"></i><i style="left:57px;top:42px;width:1px;background:linear-gradient(#333333 50%,#33333380 50%)"></i><i style="left:58px;top:42px;width:1px;background:linear-gradient(#333333 50%,#33333380 50%)"></i><i style="left:59px;top:42px;width:1px;background:linear-gradient(#333333 50%,#33333380 50%)"></i><i style="left:60px;top:42px;width:1px;background:linear-gradient(#333333 50%,#33333380 50%)"></i><i style="left:61px;top:42px;width:1px;background:linear-gradient(#333333 50%,#33333380 50%)"></i><i style="left:4px;top:44px;width:5px;background:linear-gradient(#0000ff 50%,#0000ff80 50%)"></i><i style="left:10px;top:44px;width:3px;background:linear-gradient(#0000ff 50%,#0000ff80 50%)"></i><i style="left:14px;top:44px;width:5px;background:linear-gradient(#267f99 50%,#267f9980 50%)"></i><i style="left:19px;top:44px;width:1px;background:linear-gradient(#333333 50%,#33333380 50%)"></i><i style="left:20px;top:44px;width:38px;background:linear-gradient(#a31515 50%,#a3151580 50%)"></i><i style="left:59px;top:44px;width:1px;background:linear-gradient(#333333 50%,#33333380 50%)"></i><i style="left:61px;top:44px;width:4px;background:linear-gradient(#267f99 50%,#267f9980 50%)"></i><i style="left:65px;top:44px;width:1px;background:linear-gradient(#333333 50%,#33333380 50%)"></i><i style="left:66px;top:44px;width:9px;background:linear-gradient(#333333 50%,#33333380 50%)"></i><i style="left:75px;top:44px;width:1px;background:linear-gradient(#333333 50%,#33333380 50%)"></i><i style="left:76px;top:44px;width:9px;background:linear-gradient(#333333 50%,#33333380 50%)"></i><i style="left:85px;top:44px;width:1px;background:linear-gradient(#333333 50%,#33333380 50%)"></i><i style="left:86px;top:44px;width:9px;background:linear-gradient(#333333 50%,#33333380 50%)"></i><i style="left:95px;top:44px;width:1px;background:linear-gradient(#333333 50%,#33333380 50%)"></i><i style="left:96px;top:44px;width:1px;background:linear-gradient(#333333 50%,#33333380 50%)"></i><i style="left:97px;top:44px;width:1px;background:linear-gradient(#333333 50%,#33333380 50%)"></i><i style="left:98px;top:44px;width:1px;background:linear-gradient(#333333 50%,#33333380 50%)"></i><i style="left:99px;top:44px;width:1px;background:linear-gradient(#333333 50%,#33333380 50%)"></i><i style="left:0px;top:46px;width:1px;background:linear-gradient(#333333 50%,#33333380 50%)"></i><i style="left:0px;top:50px;width:5px;background:linear-gradient(#0000ff 50%,#0000ff80 50%)"></i><i style="left:6px;top:50px;width:4px;background:linear-gradient(#333333 50%,#33333380 50%)"></i><i style="left:11px;top:50px;width:1px;background:linear-gradient(#333333 50%,#33333380 50%)"></i><i style="left:13px;top:50px;width:1px;background:linear-gradient(#333333 50%,#33333380 50%)"></i><i style="left:4px;top:52px;width:4px;background:linear-gradient(#333333 50%,#33333380 50%)"></i><i style="left:8px;top:52px;width:1px;background:linear-gradient(#333333 50%,#33333380 50%)"></i><i style="left:20px;top:52px;width:6px;background:linear-gradient(#333333 50%,#33333380 50%)"></i><i style="left:26px;top:52px;width:1px;background:linear-gradient(#333333 50%,#33333380 50%)"></i><i style="left:27px;top:52px;width:4px;background:linear-gradient(#333333 50%,#33333380 50%)"></i><i style="left:31px;top:52px;width:1px;background:linear-gradient(#333333 50%,#33333380 50%)"></i><i style="left:4px;top:54px;width:5px;background:linear-gradient(#333333 50%,#33333380 50%)"></i><i style="left:9px;top:54px;width:1px;background:linear-gradient(#333333 50%,#33333380 50%)"></i><i style="left:20px;top:54px;width:6px;background:linear-gradient(#333333 50%,#33333380 50%)"></i><i style="left:26px;top:54px;width:1px;background:linear-gradient(#333333 50%,#33333380 50%)"></i><i style="left:27px;top:54px;width:5px;background:linear-gradient(#333333 50%,#33333380 50%)"></i><i style="left:32px;top:54px;width:1px;background:linear-gradient(#333333 50%,#33333380 50%)"></i><i style="left:4px;top:56px;width:11px;background:linear-gradient(#333333 50%,#33333380 50%)"></i><i style="left:15px;top:56px;width:1px;background:linear-gradient(#333333 50%,#33333380 50%)"></i><i style="left:20px;top:56px;width:6px;background:linear-gradient(#333333 50%,#33333380 50%)"></i><i style="left:26px;top:56px;width:1px;background:linear-gradient(#333333 50%,#33333380 50%)"></i><i style="left:27px;top:56px;width:11px;background:linear-gradient(#333333 50%,#33333380 50%)"></i><i style="left:38px;top:56px;width:1px;background:linear-gradient(#333333 50%,#33333380 50%)"></i><i style="left:4px;top:58px;width:8px;background:linear-gradient(#333333 50%,#33333380 50%)"></i><i style="left:12px;top:58px;width:1px;background:linear-gradient(#333333 50%,#33333380 50%)"></i><i style="left:20px;top:58px;width:6px;background:linear-gradient(#333333 50%,#33333380 50%)"></i><i style="left:26px;top:58px;width:1px;background:linear-gradient(#333333 50%,#33333380 50%)"></i><i style="left:27px;top:58px;width:8px;background:linear-gradient(#333333 50%,#33333380 50%)"></i><i style="left:35px;top:58px;width:1px;background:linear-gradient(#333333 50%,#33333380 50%)"></i><i style="left:0px;top:60px;width:1px;background:linear-gradient(#333333 50%,#33333380 50%)"></i><i style="left:1px;top:60px;width:1px;background:linear-gradient(#333333 50%,#33333380 50%)"></i><i style="left:0px;top:64px;width:5px;background:linear-gradient(#0000ff 50%,#0000ff80 50%)"></i><i style="left:6px;top:64px;width:9px;background:linear-gradient(#333333 50%,#33333380 50%)"></i><i style="left:16px;top:64px;width:1px;background:linear-gradient(#333333 50%,#33333380 50%)"></i><i style="left:18px;top:64px;width:5px;background:linear-gradient(#267f99 50%,#267f9980 50%)"></i><i style="left:23px;top:64px;width:1px;background:linear-gradient(#333333 50%,#33333380 50%)"></i><i style="left:24px;top:64px;width:7px;background:linear-gradient(#333333 50%,#33333380 50%)"></i><i style="left:31px;top:64px;width:1px;background:linear-gradient(#333333 50%,#33333380 50%)"></i><i style="left:32px;top:64px;width:4px;background:linear-gradient(#333333 50%,#33333380 50%)"></i><i style="left:36px;top:64px;width:1px;background:linear-gradient(#333333 50%,#33333380 50%)"></i><i style="left:37px;top:64px;width:21px;background:linear-gradient(#a31515 50%,#a3151580 50%)"></i><i style="left:58px;top:64px;width:1px;background:linear-gradient(#333333 50%,#33333380 50%)"></i><i style="left:60px;top:64px;width:4px;background:linear-gradient(#333333 50%,#33333380 50%)"></i><i style="left:64px;top:64px;width:1px;background:linear-gradient(#333333 50%,#33333380 50%)"></i><i style="left:65px;top:64px;width:1px;background:linear-gradient(#333333 50%,#33333380 50%)"></i><i style="left:0px;top:66px;width:5px;background:linear-gradient(#267f99 50%,#267f9980 50%)"></i><i style="left:5px;top:66px;width:1px;background:linear-gradient(#333333 50%,#33333380 50%)"></i><i style="left:6px;top:66px;width:9px;background:linear-gradient(#333333 50%,#33333380 50%)"></i><i style="left:15px;top:66px;width:1px;background:linear-gradient(#333333 50%,#33333380 50%)"></i><i style="left:16px;top:66px;width:10px;background:linear-gradient(#333333 50%,#33333380 50%)"></i><i style="left:26px;top:66px;width:1px;background:linear-gradient(#333333 50%,#33333380 50%)"></i><i style="left:27px;top:66px;width:1px;background:linear-gradient(#333333 50%,#33333380 50%)"></i><i style="left:28px;top:66px;width:7px;background:linear-gradient(#333333 50%,#33333380 50%)"></i><i style="left:35px;top:66px;width:1px;background:linear-gradient(#333333 50%,#33333380 50%)"></i><i style="left:37px;top:66px;width:28px;background:linear-gradient(#a31515 50%,#a3151580 50%)"></i><i style="left:66px;top:66px;width:1px;background:linear-gradient(#333333 50%,#33333380 50%)"></i><i style="left:67px;top:66px;width:1px;background:linear-gradient(#333333 50%,#33333380 50%)"></i><i style="left:68px;top:66px;width:1px;background:linear-gradient(#333333 50%,#33333380 50%)"></i></div>
    <div id="sbar"><div id="thumb"></div><div id="ovl"></div></div>
    <div id="snip">
            <svg class="abs" style="left:14px;top:15px" width="18" height="17" viewBox="0 0 18 17" fill="none" stroke="#7d8892" stroke-width="1.3"><path d="M5 4 1 8.5 5 13M13 4l4 4.5L13 13M10.5 1 7.5 16"/></svg>
      <div class="abs" style="left:36px;top:13px;font-size:18px;font-weight:bold;color:#7d8892;line-height:22px;transform:scaleX(0.9);transform-origin:0 0">Snippets</div>
      <div class="abs" style="left:14px;top:33px;width:346px;height:1px;background:#d7dce3"></div>
      <div class="abs" style="left:14px;top:41px;width:346px;height:29px;border:1px solid #c9ced6;border-radius:4px"><span class="abs" style="left:8px;top:6px;font-size:12.8px;color:#868e96;line-height:16px;transform:scaleX(0.91);transform-origin:0 0">Search</span></div>
      <div class="abs" style="left:14px;top:77px;width:346px;height:1px;background:#e3e6ea"></div>
      <div class="tree" style="top:91px"><div class="pb"></div><svg class="abs fold" style="left:38px;top:0px" width="15" height="13" viewBox="0 0 15 13" fill="none" stroke="#505459" stroke-width="1"><path d="M1.3 2.3V11a.9.9 0 0 0 .9.9h10.6a.9.9 0 0 0 .9-.9L14 4.6a.9.9 0 0 0-.9-.9H6.6L5.4 1.6a.8.8 0 0 0-.7-.4H2.2a.9.9 0 0 0-.9.9zM1.3 3.7h5.3"/></svg><span class="tl">E8App</span></div>
      <div class="tree" style="top:119px"><div class="pb"></div><svg class="abs fold" style="left:38px;top:0px" width="15" height="13" viewBox="0 0 15 13" fill="none" stroke="#505459" stroke-width="1"><path d="M1.3 2.3V11a.9.9 0 0 0 .9.9h10.6a.9.9 0 0 0 .9-.9L14 4.6a.9.9 0 0 0-.9-.9H6.6L5.4 1.6a.8.8 0 0 0-.7-.4H2.2a.9.9 0 0 0-.9.9zM1.3 3.7h5.3"/></svg><span class="tl">Global</span></div>
      <div class="abs" style="left:354px;top:0;width:20px;height:20px;border:1px solid #dfe2e8;border-top:none;border-right:none;border-bottom-left-radius:4px;background:#fff;box-shadow:-1px 1px 4px rgba(0,0,0,.06)"><div class="abs" style="left:6px;top:10px;width:7px;height:1px;background:#aaa"></div></div>
    </div>
  </div>
</div>

<div id="corner"></div>
</body></html>
